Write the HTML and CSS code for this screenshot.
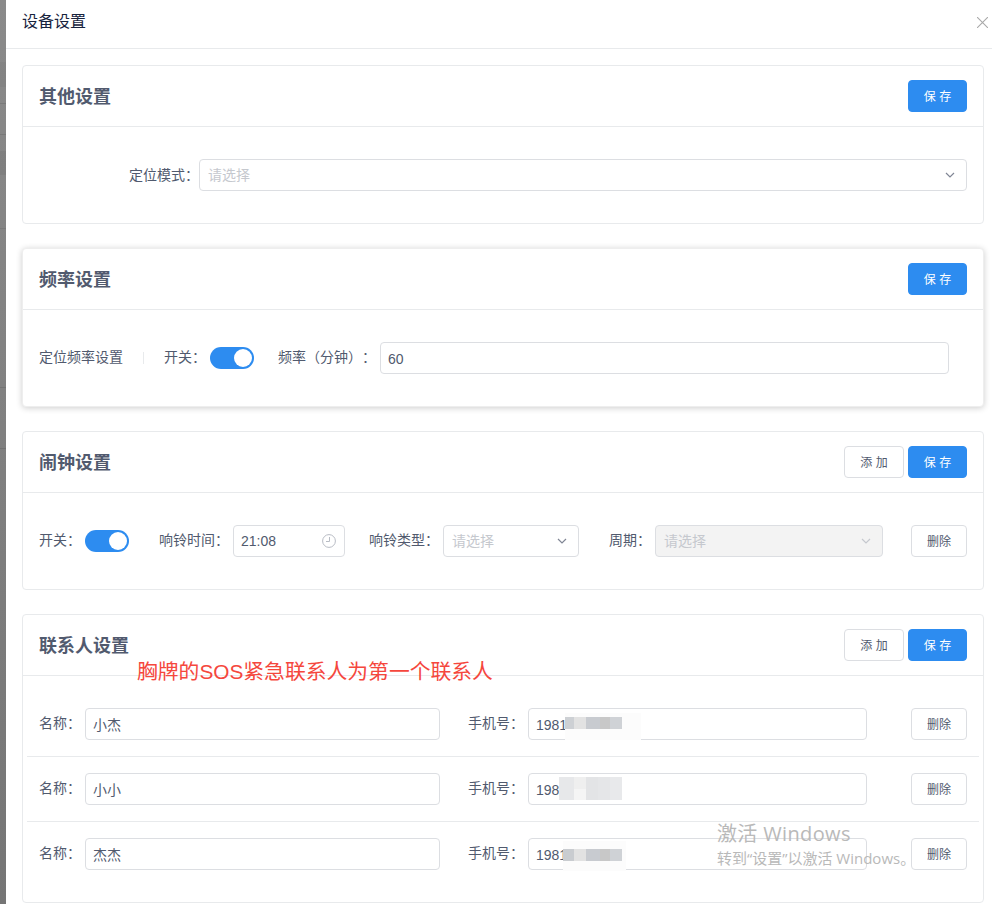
FILE: index.html
```html
<!DOCTYPE html>
<html lang="zh-CN">
<head>
<meta charset="utf-8">
<title>设备设置</title>
<link rel="stylesheet" href="styles.css">
</head>
<body>
<div class="page">
  <div class="strip"></div>
  <div class="drawer">
    <header class="drawer-head">
      <span class="drawer-title">设备设置</span>
      <svg class="close" width="11" height="11" viewBox="0 0 11 11"><path d="M0 0L11 11M11 0L0 11" stroke="#a9a9a9" stroke-width="1.1" fill="none"/></svg>
    </header>
    <main class="drawer-body">

      <section class="card">
        <div class="card-head"><h2 class="card-title">其他设置</h2><div class="actions"><button class="btn btn-primary">保 存</button></div></div>
        <div class="card-body">
          <div class="row row-mode">
            <span class="label label-mode">定位模式：</span>
            <div class="select w-mode"><span class="ph">请选择</span><svg class="chev" width="10" height="6" viewBox="0 0 10 6"><path d="M1 1L5 5L9 1" stroke="#808695" stroke-width="1.2" fill="none"/></svg></div>
          </div>
        </div>
      </section>

      <section class="card card-raised">
        <div class="card-head"><h2 class="card-title">频率设置</h2><div class="actions"><button class="btn btn-primary">保 存</button></div></div>
        <div class="card-body">
          <div class="row">
            <span class="plain">定位频率设置</span>
            <span class="vline"></span>
            <span class="label">开关：</span>
            <span class="switch"><span class="knob"></span></span>
            <span class="label ml-24">频率（分钟）：</span>
            <input class="input w-freq" value="60">
          </div>
        </div>
      </section>

      <section class="card">
        <div class="card-head"><h2 class="card-title">闹钟设置</h2><div class="actions"><button class="btn">添 加</button><button class="btn btn-primary">保 存</button></div></div>
        <div class="card-body">
          <div class="row">
            <span class="label">开关：</span>
            <span class="switch"><span class="knob"></span></span>
            <span class="label ml-30">响铃时间：</span>
            <div class="select w-time"><span class="val">21:08</span><svg class="clock" width="14" height="14" viewBox="0 0 14 14"><circle cx="7" cy="7" r="6.4" stroke="#b8bcc4" fill="none"/><path d="M7.5 3V7.5H4" stroke="#b8bcc4" fill="none"/></svg></div>
            <span class="label ml-24">响铃类型：</span>
            <div class="select w-type"><span class="ph">请选择</span><svg class="chev" width="10" height="6" viewBox="0 0 10 6"><path d="M1 1L5 5L9 1" stroke="#808695" stroke-width="1.2" fill="none"/></svg></div>
            <span class="label ml-30">周期：</span>
            <div class="select w-cycle disabled"><span class="ph">请选择</span><svg class="chev" width="10" height="6" viewBox="0 0 10 6"><path d="M1 1L5 5L9 1" stroke="#c5c8ce" stroke-width="1.2" fill="none"/></svg></div>
            <button class="btn btn-del ml-28">删除</button>
          </div>
        </div>
      </section>

      <section class="card card-contacts">
        <div class="card-head"><h2 class="card-title">联系人设置</h2><div class="actions"><button class="btn">添 加</button><button class="btn btn-primary">保 存</button></div></div>
        <div class="card-body contacts">
          <div class="contact">
            <span class="label">名称：</span>
            <input class="input w-name" value="小杰">
            <span class="label ml-28">手机号：</span>
            <input class="input w-phone" value="1981">
            <button class="btn btn-del ml-44">删除</button>
          </div>
          <div class="contact">
            <span class="label">名称：</span>
            <input class="input w-name" value="小小">
            <span class="label ml-28">手机号：</span>
            <input class="input w-phone" value="198">
            <button class="btn btn-del ml-44">删除</button>
          </div>
          <div class="contact">
            <span class="label">名称：</span>
            <input class="input w-name" value="杰杰">
            <span class="label ml-28">手机号：</span>
            <input class="input w-phone" value="1981">
            <button class="btn btn-del ml-44">删除</button>
          </div>
        </div>
      </section>
    </main>
  </div>

  <div class="mask-pale mask-pale-1"></div>
  <div class="mosaic mosaic-1"></div>
  <div class="mosaic mosaic-2"></div>
  <div class="mask-pale mask-pale-3"></div>
  <div class="mosaic mosaic-3"></div>

  <div class="note">胸牌的SOS紧急联系人为第一个联系人</div>
  <div class="watermark">
    <div class="wm-big">激活 Windows</div>
    <div class="wm-small">转到“设置”以激活 Windows。</div>
  </div>
</div>
</body>
</html>
```
FILE: styles.css
```css
* { box-sizing: border-box; }
html, body { margin: 0; height: 904px; overflow: hidden; background: #fff; }
body {
  font-family: "Liberation Sans", "Noto Sans CJK SC", sans-serif;
  font-size: 14px;
  color: #515a6e;
  text-spacing-trim: space-all;
}
.page { position: relative; display: flex; width: 992px; height: 904px; overflow: hidden; }

.strip {
  flex: 0 0 6px;
  background:
    linear-gradient(to bottom,
      transparent 62px, rgba(0,0,0,.04) 62px, rgba(0,0,0,.04) 87px, transparent 87px,
      transparent 103px, rgba(0,0,0,.1) 103px, rgba(0,0,0,.1) 104px, transparent 104px,
      transparent 134px, rgba(0,0,0,.1) 134px, rgba(0,0,0,.1) 135px, transparent 135px,
      transparent 151px, rgba(0,0,0,.05) 151px, rgba(0,0,0,.05) 175px, transparent 175px,
      transparent 228px, rgba(0,0,0,.08) 228px, rgba(0,0,0,.08) 229px, transparent 229px,
      transparent 387px, rgba(0,0,0,.1) 387px, rgba(0,0,0,.1) 388px, transparent 388px,
      transparent 448px, rgba(0,0,0,.1) 448px, rgba(0,0,0,.1) 449px, transparent 449px),
    linear-gradient(to bottom, #8a8a8a, #757575);
}
.drawer { flex: 1; min-width: 0; background: #fff; }
.drawer-head {
  display: flex; align-items: center; justify-content: space-between;
  height: 49px; padding: 0 4px 4px 16px;
  border-bottom: 1px solid #e8eaec;
}
.drawer-title { font-size: 16px; color: #17233d; line-height: 44px; }
.close { display: block; }
.drawer-body { padding: 16px 8px 0 16px; }

.card {
  height: 159px; margin-bottom: 24px;
  background: #fff; border: 1px solid #e8eaec; border-radius: 4px;
}
.card-raised { border-color: #eee; box-shadow: 0 1px 6px rgba(0,0,0,.2); }
.card-contacts { height: 289px; margin-bottom: 0; }
.card-head {
  display: flex; align-items: center; justify-content: space-between;
  height: 61px; padding: 0 16px; border-bottom: 1px solid #e8eaec;
}
.card-title { margin: 0; padding-top: 1px; font-size: 18px; font-weight: 700; color: #515a6e; line-height: 24px; }
.actions { display: flex; gap: 4px; }
.card-body { padding: 32px 16px; }
.contacts { padding: 16px 4px 0; }

.row { display: flex; align-items: center; height: 32px; }
.row-mode { padding-left: 90px; }
.contact {
  display: flex; align-items: center; height: 65px; padding: 0 12px;
  border-bottom: 1px solid #e8eaec;
}
.contact:last-child { border-bottom: 0; height: 64px; }

.label { flex: none; margin-right: 4px; line-height: 20px; color: #515a6e; position: relative; top: -1px; }
.label-mode { margin-right: 0; top: 0; }
.plain { flex: none; line-height: 20px; padding-bottom: 2px; }
.vline { flex: none; width: 1px; height: 12px; margin: 0 20px; background: #e8eaec; }
.ml-24 { margin-left: 24px; }
.ml-28 { margin-left: 28px; }
.ml-30 { margin-left: 30px; }
.ml-44 { margin-left: 44px; }

.btn {
  flex: none; height: 32px; width: 60px; padding: 0 0 2px;
  font: 12px "Liberation Sans", "Noto Sans CJK SC", sans-serif;
  color: #515a6e; background: #fff;
  border: 1px solid #dcdee2; border-radius: 4px;
}
.btn-primary { width: 59px; color: #fff; background: #2d8cf0; border-color: #2d8cf0; }
.btn-del { width: 56px; }

.input, .select {
  flex: none; height: 32px; padding: 1px 7px 0;
  font: 14px "Liberation Sans", "Noto Sans CJK SC", sans-serif;
  color: #515a6e; background: #fff;
  border: 1px solid #dcdee2; border-radius: 4px; outline: 0;
}
.select { display: flex; align-items: center; justify-content: space-between; padding: 0 11px 0 8px; }
.disabled { background: #f3f3f3; }
.ph { color: #c5c8ce; padding-bottom: 2px; }
.val { color: #515a6e; }
.chev, .clock { flex: none; display: block; }
.w-mode { width: 768px; }
.w-freq { width: 569px; }
.w-time { width: 112px; padding: 0 8px 0 7px; }
.w-type { width: 136px; }
.w-cycle { width: 228px; }
.w-name { width: 355px; padding-top: 0; }
.w-phone { width: 339px; }

.switch {
  flex: none; position: relative; display: block; width: 44px; height: 22px;
  background: #2d8cf0; border-radius: 11px;
}
.knob { position: absolute; top: 2px; right: 2px; width: 18px; height: 18px; background: #fff; border-radius: 50%; }

.note {
  position: absolute; left: 137px; top: 658px;
  font-size: 20.8px; line-height: 28px; color: #f5473d; white-space: nowrap;
}
.watermark { position: absolute; left: 717px; top: 820px; color: #b9b9b9; white-space: nowrap; font-family: "Open Sans", "Noto Sans CJK SC", sans-serif; }
.wm-big { font-size: 20px; line-height: 28px; letter-spacing: .35px; }
.wm-small { font-size: 15px; line-height: 20px; }

.mask-pale { position: absolute; background: #fcfcfc; }
.mask-pale-1 { left: 565px; top: 713px; width: 76px; height: 27px; }
.mask-pale-3 { left: 563px; top: 841px; width: 63px; height: 30px; }
.mosaic { position: absolute; }
.mosaic-1 {
  left: 565px; top: 717px; width: 57px; height: 12px;
  background: linear-gradient(to right, #cdd0d4 0 9px, #e2e2e2 9px 21px, #c8cbd0 21px 35px, #c8c8c8 35px 45px, #cfd2d6 45px);
}
.mosaic-2 {
  left: 559px; top: 777px; width: 63px; height: 23px;
  background:
    linear-gradient(to bottom, #efefef 0 12px, #f5f5f5 12px) 15px 0 / 12px 23px no-repeat,
    linear-gradient(to right, #e7e8ea 0 27px, #e3e4e6 27px 39px, #e5e6e8 39px 51px, #e8e9eb 51px);
}
.mosaic-3 {
  left: 563px; top: 849px; width: 59px; height: 12px;
  background: linear-gradient(to right, #c9ccd0 0 11px, #e2e2e2 11px 23px, #c8cbd0 23px 37px, #c8c8c8 37px 47px, #cfd2d6 47px);
}
```
